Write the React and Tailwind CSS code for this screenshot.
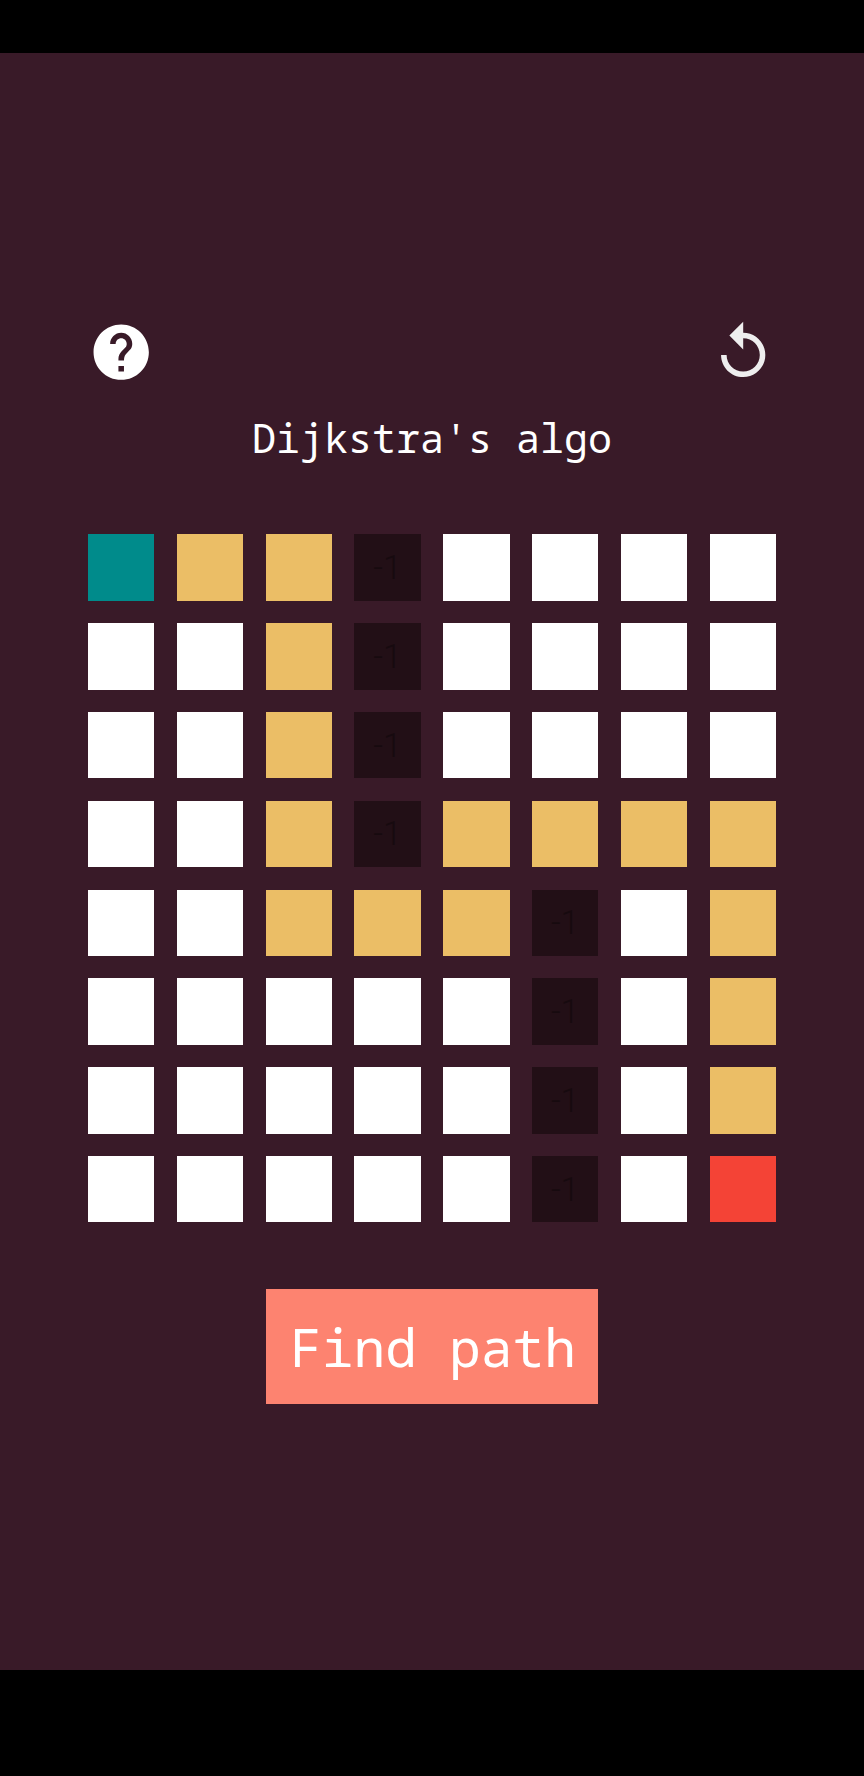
import { useState } from "react";

// s = start, p = path, w = wall, e = end, . = empty
const initialGrid = [
  "sppw....",
  "..pw....",
  "..pw....",
  "..pwpppp",
  "..pppw.p",
  ".....w.p",
  ".....w.p",
  ".....w.e",
];

const cellColors = {
  s: "bg-[#008b8b]",
  p: "bg-[#ebbe66]",
  w: "bg-[#220f16]",
  e: "bg-[#f44336]",
  ".": "bg-white",
};

const Cell = ({ type }) => (
  <div className={`flex h-[66.4px] w-[66.4px] items-center justify-center ${cellColors[type]}`}>
    {type === "w" && <span className="font-['Roboto',sans-serif] text-[34px] font-light text-[#170a0f]">-1</span>}
  </div>
);

const App = () => {
  const [grid] = useState(initialGrid);

  return (
    <div className="flex h-[1776px] w-[864px] flex-col bg-black">
      <div className="h-[53px] shrink-0" />
      <div className="flex flex-1 flex-col items-center justify-center bg-[#391a28]">
        <div className="flex h-[66.4px] w-[688px] items-center justify-between">
          <svg viewBox="0 0 24 24" className="h-[66.4px] w-[66.4px] fill-white">
            <path d="M12 2C6.48 2 2 6.48 2 12s4.48 10 10 10 10-4.48 10-10S17.52 2 12 2zm1 17h-2v-2h2v2zm2.07-7.75l-.9.92C13.45 12.9 13 13.5 13 15h-2v-.5c0-1.1.45-2.1 1.17-2.83l1.24-1.26c.37-.36.59-.86.59-1.41 0-1.1-.9-2-2-2s-2 .9-2 2H8c0-2.21 1.79-4 4-4s4 1.79 4 4c0 .88-.36 1.68-.93 2.25z" />
          </svg>
          <svg viewBox="0 0 24 24" className="h-[66.4px] w-[66.4px] fill-[#eeeeee]">
            <path d="M12 5V1L7 6l5 5V7c3.31 0 6 2.69 6 6s-2.69 6-6 6-6-2.69-6-6H4c0 4.42 3.58 8 8 8s8-3.58 8-8-3.58-8-8-8z" />
          </svg>
        </div>

        <h1 className="mt-[25px] mb-[69.2px] font-['Noto_Sans_Mono','DejaVu_Sans_Mono',monospace] text-[40px] leading-[54.7px] font-normal text-white">
          Dijkstra's algo
        </h1>

        <div className="grid w-[688px] grid-cols-8 gap-[22.4px]">
          {grid.map((row, r) => row.split("").map((type, c) => <Cell key={`${r}-${c}`} type={type} />))}
        </div>

        <button className="mt-[66.5px] flex h-[115px] w-[332.8px] items-center justify-center bg-[#fd8370] pt-[1px] pl-[2px] font-['Noto_Sans_Mono','DejaVu_Sans_Mono',monospace] text-[53px] text-white">
          Find path
        </button>
      </div>
      <div className="h-[106px] shrink-0" />
    </div>
  );
};

export default App;
